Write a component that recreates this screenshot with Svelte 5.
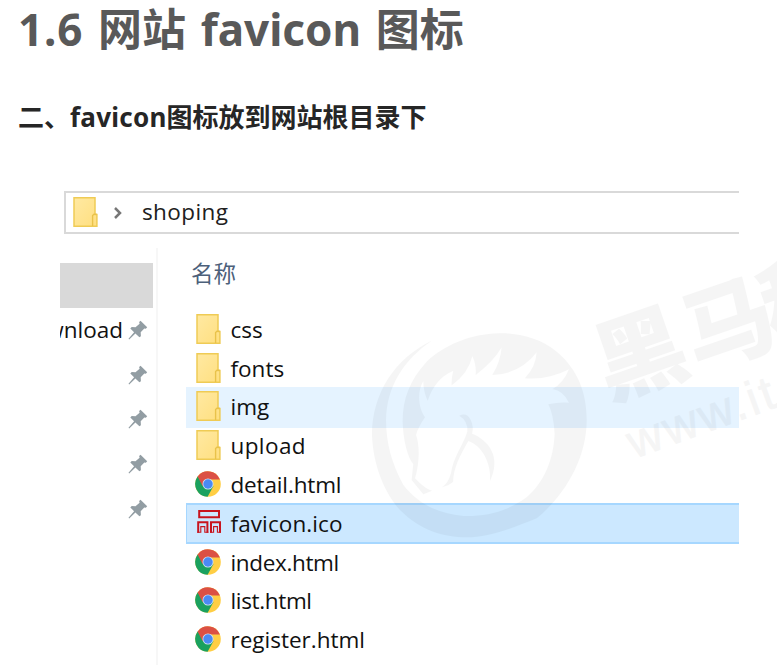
<script>
  const files = [
    { name: 'css', kind: 'folder' },
    { name: 'fonts', kind: 'folder' },
    { name: 'img', kind: 'folder', hover: true },
    { name: 'upload', kind: 'folder', spacing: 0.4 },
    { name: 'detail.html', kind: 'chrome', spacing: -0.15 },
    { name: 'favicon.ico', kind: 'ico', selected: true, spacing: 0.1 },
    { name: 'index.html', kind: 'chrome', spacing: -0.35 },
    { name: 'list.html', kind: 'chrome', spacing: -0.35 },
    { name: 'register.html', kind: 'chrome' }
  ];
  const pins = ['wnload', '', '', '', ''];
</script>

{#snippet folder()}
  <svg class="icon" width="26" height="30" viewBox="0 0 26 30">
    <defs>
      <linearGradient id="paper" x1="0" y1="0" x2="1" y2="1">
        <stop offset="0" stop-color="#ffe9a2" /><stop offset="1" stop-color="#ffdf80" />
      </linearGradient>
    </defs>
    <path d="M2 .8H23V17.4H24.9V29.2H2Z" fill="url(#paper)" stroke="#efcb55" stroke-width="1.5" />
    <path d="M20.6 29V18.6L22 17.2H24.7" fill="none" stroke="#e9c24a" stroke-width="1.4" />
  </svg>
{/snippet}

{#snippet chrome()}
  <svg class="icon" width="26" height="26" viewBox="0 0 26 26">
    <circle cx="13" cy="13" r="12.8" fill="#ffce44" />
    <path d="M13 13L2.6 5.6A12.8 12.8 0 0 0 12.6 25.8L18.5 15Z" fill="#1aa15f" />
    <path d="M2.6 5.6A12.8 12.8 0 0 1 24.9 8.4H13L7.5 15Z" fill="#db5044" />
    <circle cx="13" cy="13" r="5.5" fill="#d5e2ee" />
    <circle cx="13" cy="13" r="4.7" fill="#4a8af4" />
  </svg>
{/snippet}

{#snippet ico()}
  <svg class="icon" width="26" height="26" viewBox="0 0 26 26" fill="none" stroke="#c8141e" stroke-width="2">
    <path d="M4.2 1H24V7.2H4.2Z" />
    <path d="M3.2 22.8V12.2H12.4V22.8M16 22.8V12.2H25V22.8" />
    <path d="M2.2 22.2H5.8V16.6H9.8V22.2H13.4M15 22.2H18.6V16.6H22.4V22.2H26" stroke-width="1.1" />
  </svg>
{/snippet}

<main>
  <h1><span>1.6</span> 网站 favicon 图标</h1>
  <h2>二、<span>favicon</span>图标放到网站根目录下</h2>

  <section class="explorer">
    <div class="address">
      {@render folder()}
      <svg class="chevron" width="10" height="12" viewBox="0 0 10 12"><path d="M2 1L7 6L2 11" /></svg>
      <span>shoping</span>
    </div>
    <div class="panes">
      <aside>
        <div class="block"></div>
        {#each pins as label}
          <div class="pin">
            <span>{label}</span>
            <svg width="20" height="20" viewBox="0 0 20 20" fill="#929da3">
              <path d="M12.5 .7L19.2 7.2L17.8 8.7L16.3 8.4L12.7 12.2L12.9 16.2L11.4 17.3L7.4 13.5L1.2 19.4L.5 18.8L6.1 12.2L2.3 8.4L3.7 7.1L7.5 7.3L11.6 3.8L11.1 2.1Z" />
            </svg>
          </div>
        {/each}
      </aside>
      <div class="list">
        <div class="column">名称</div>
        {#each files as f}
          <div class="row" class:hover={f.hover} class:selected={f.selected}>
            {#if f.kind === 'folder'}{@render folder()}{:else if f.kind === 'chrome'}{@render chrome()}{:else}{@render ico()}{/if}
            <span style:letter-spacing="{f.spacing ?? 0}px">{f.name}</span>
          </div>
        {/each}
      </div>
    </div>
  </section>

  <svg class="watermark" width="777" height="665" viewBox="0 0 777 665">
    <g transform="translate(360 320) scale(.33333)">
      <path d="M215 62C105 115 36 220 36 345C40 440 75 520 120 570C180 630 250 652 320 652C380 652 450 628 530 595C610 530 680 420 680 300C680 220 655 150 590 95C540 55 480 40 420 40C330 42 255 75 200 125C150 180 128 235 128 305C130 360 142 410 160 432L155 480L190 523L216 512C200 510 180 490 165 475C178 430 180 380 168 345Q175 320 195 292C175 265 170 215 190 183Q190 215 203 242Q225 175 280 152Q274 174 275 196Q325 160 337 108Q350 135 347 165Q400 125 425 82Q422 125 397 165Q480 162 530 97Q528 140 495 175Q565 180 627 148Q610 190 578 207Q610 212 627 248Q600 245 565 253Q580 280 584 340C582 420 550 490 500 532C440 575 380 590 310 588C220 580 165 540 130 495C95 430 78 370 78 300C80 200 130 120 215 62Z" />
      <path d="M298 287Q320 276 332 300Q342 320 336 341C385 360 425 410 390 483C395 430 365 375 325 363C300 405 280 445 279 486Q265 498 246 502Q265 490 273 460C280 410 310 375 322 335Q325 303 298 287Z" />
    </g>
    <text class="brand" transform="translate(608 400) rotate(-19)" x="0 93 176">黑马程</text>
    <text class="site" transform="translate(634 459) rotate(-20)">www.it</text>
  </svg>
</main>

<style>
  :global(body) { margin: 0; background: #fff; }
  main {
    position: relative; box-sizing: border-box; width: 777px; height: 665px; overflow: hidden;
    font-family: "Open Sans", "Noto Sans CJK SC", sans-serif;
  }
  h1, h2 { margin: 0; padding-left: 18px; white-space: nowrap; font-weight: 700; font-family: "Noto Sans", "Noto Sans CJK SC", sans-serif; }
  h1 { font-size: 44px; line-height: 58px; height: 60px; word-spacing: 3.2px; color: #595959; }
  h1 span { letter-spacing: .9px; }
  h2 { font-size: 26px; line-height: 40px; margin-top: 37px; color: #262626; }
  h2 span { letter-spacing: .25px; }
  .explorer { margin: 54px 38px 0 60px; }
  .icon { display: block; flex: none; }
  .address {
    box-sizing: border-box; height: 43px; margin-left: 4px; padding-left: 6px;
    border: 2px solid #d9d9d9; border-right: 0; display: flex; align-items: center;
    color: #202020; font-size: 22.5px;
  }
  .address .icon { margin-top: -2px; }
  .address span { letter-spacing: .4px; margin-top: -2px; }
  .chevron { margin: 0 19px 0 15px; fill: none; stroke: #777; stroke-width: 2.5; }
  .panes { display: flex; margin-top: 14px; height: 418px; }
  aside { width: 96px; border-right: 2px solid #f7f7f7; padding-top: 15px; flex: none; }
  .block { width: 93px; height: 45px; background: #d9d9d9; }
  .pin {
    height: 44.6px; width: 88px; display: flex; align-items: center; justify-content: flex-end;
    gap: 5px; overflow: hidden; font-size: 22.5px; color: #111;
  }
  .pin span { margin-top: -2px; }
  .pin svg { flex: none; }
  .list { flex: 1; margin-left: 28px; }
  .column { height: 62.5px; line-height: 51px; padding-left: 5px; font-size: 22.5px; color: #4c607a; }
  .row { box-sizing: border-box; height: 38.8px; display: flex; align-items: center; padding-left: 9px; font-size: 22.5px; color: #111; }
  .row span { margin: -1px 0 0 9.5px; }
  .row .icon { margin-top: -2px; }
  .row.hover { box-shadow: 0 1px 0 #e5f3ff, 0 -1px 0 #e5f3ff; background: #e5f3ff; }
  .row.selected {
    background: #cce8ff; border: solid #a6d7ff; border-width: 1px 0 1px 1px; padding-left: 8px;
    box-shadow: 0 1px 0 #a6d7ff, 0 -1px 0 #a6d7ff;
  }
  .watermark { position: absolute; left: 0; top: 0; fill: #000; opacity: .036; }
  .brand { font: 900 91px "Noto Sans CJK SC", sans-serif; }
  .site { font: 48px "Liberation Sans", sans-serif; letter-spacing: 3px; stroke: #000; stroke-width: .8; }
</style>
